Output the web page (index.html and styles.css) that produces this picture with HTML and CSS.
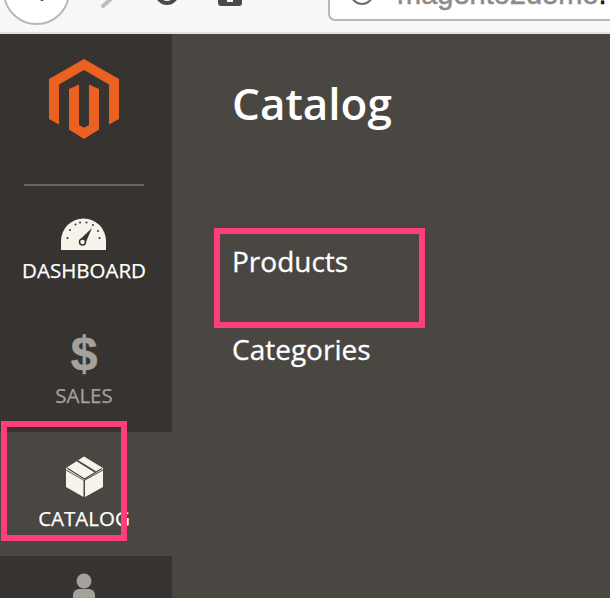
FILE: index.html
```html
<!DOCTYPE html>
<html lang="en">
<head>
<meta charset="utf-8">
<title>Catalog</title>
<link rel="stylesheet" href="styles.css">
</head>
<body>
<header class="browser">
  <div class="back"><svg class="back-icon" width="20" height="14" viewBox="0 0 20 14"><path d="M6 0l10 8" fill="none" stroke="#4a4a4a" stroke-width="4" stroke-linecap="round"/></svg></div>
  <svg class="forward" width="14" height="10" viewBox="0 0 14 10"><path d="M2 7l9-8" fill="none" stroke="#bdbdbd" stroke-width="4" stroke-linecap="round"/></svg>
  <svg class="reload" width="24" height="8" viewBox="0 0 24 8"><path d="M2-6a10 10 0 0 0 20 0" transform="translate(0 2)" fill="none" stroke="#4a4a4a" stroke-width="4"/></svg>
  <svg class="home" width="24" height="8" viewBox="0 0 24 8"><path d="M0 0h9v3h6V0h9v4a3 3 0 0 1-3 3H3a3 3 0 0 1-3-3z" fill="#4a4a4a"/></svg>
  <div class="address">
    <svg class="info" width="24" height="8" viewBox="0 0 24 8"><path d="M1-6a11 11 0 0 0 22 0" transform="translate(0 1)" fill="none" stroke="#6e6e6e" stroke-width="2"/></svg>
    <span class="url">magento2demo<span class="url-domain">.</span></span>
  </div>
</header>
<div class="admin">
  <nav class="sidebar">
    <div class="logo">
      <svg width="70" height="80" viewBox="49 59 70 80"><path fill="#eb6122" fill-rule="evenodd" d="M84 59l35 20v40l-10 5.600V84.600L84 70 59 84.600v40L49 119V79zM69 89l10-4.400V125l5 2.800 5-2.800V84.600L99 89v40.500L84 139l-15-9.500z"/></svg>
    </div>
    <a class="item item-first">
      <svg class="icon gauge" width="45" height="32" viewBox="0 0 45 32">
        <path d="M0 32V23a22.500 22.500 0 0 1 45 0v9z" fill="#f7f3eb"/>
        <g fill="#373330"><circle cx="6.500" cy="20" r="1.100"/><circle cx="9" cy="12" r="1"/><circle cx="14.500" cy="6.500" r="1"/><circle cx="19" cy="4.500" r="1"/><circle cx="25.500" cy="4.500" r="1"/><circle cx="32" cy="7" r="1"/><circle cx="37" cy="13" r="1"/><circle cx="38.500" cy="20" r="1.100"/></g>
        <path d="M31 10L24.500 25 19 21.500z" fill="#373330"/>
        <circle cx="21.500" cy="24" r="3" fill="#f7f3eb" stroke="#373330" stroke-width="1.500"/>
      </svg>
      <span class="label label-strong">DASHBOARD</span>
    </a>
    <a class="item">
      <span class="dollar">$</span>
      <span class="label">SALES</span>
    </a>
    <a class="item item-active">
      <svg class="icon box" width="37" height="41" viewBox="0 0 37 41">
        <path d="M18 .5L37 12v1.500L18 24 0 13.500V12z" fill="#f7f3eb"/>
        <path d="M0 14.500l17.500 10V41L0 31zM37 14.500l-18 10V41l18-10z" fill="#f7f3eb"/>
        <path d="M11 4.500l18.500 11.500" stroke="#4a4742" stroke-width="1.800" fill="none"/>
        <path d="M1 12l17.500 11L36 12.500" stroke="#4a4742" stroke-width="1.200" fill="none"/>
      </svg>
      <span class="label label-strong">CATALOG</span>
    </a>
    <a class="item item-user">
      <svg class="icon person" width="22" height="34" viewBox="0 0 22 34"><circle cx="11" cy="8" r="7.500" fill="#a5a29c"/><path d="M0 34v-12a6 6 0 0 1 6-6h10a6 6 0 0 1 6 6v12z" fill="#a5a29c"/></svg>
    </a>
  </nav>
  <main class="content">
    <h1 class="title">Catalog</h1>
    <ul class="links">
      <li class="link">Products</li>
      <li class="link">Categories</li>
    </ul>
  </main>
</div>
<div class="mark mark-products"></div>
<div class="mark mark-catalog"></div>
</body>
</html>
```
FILE: styles.css
```css
* { box-sizing: border-box; }
html, body { margin: 0; padding: 0; }
body {
  position: relative;
  width: 610px;
  height: 598px;
  overflow: hidden;
  background: #4a4742;
  font-family: "Open Sans", sans-serif;
}
.browser {
  display: flex;
  align-items: flex-end;
  height: 34px;
  background: #f8f8f8;
  border-bottom: 2px solid #e2e2e2;
  overflow: hidden;
}
.back {
  flex: none;
  width: 67px;
  height: 67px;
  margin: 0 0 7px 3px;
  border: 2px solid #b8b8b8;
  border-radius: 50%;
  background: #fff;
  display: flex;
  align-items: flex-end;
  justify-content: center;
}
.back-icon { margin-bottom: 18px; margin-right: 2px; }
.forward { flex: none; margin: 0 0 23px 31px; }
.reload { flex: none; margin: 0 0 27px 40px; }
.home { flex: none; margin: 0 0 25px 39px; }
.address {
  flex: none;
  display: flex;
  align-items: flex-end;
  width: 300px;
  height: 40px;
  margin: 0 -18px 11px 86px;
  padding-left: 20px;
  background: #fff;
  border: 2px solid #b8b8b8;
  border-right: 0;
  border-radius: 0 0 0 7px;
  overflow: hidden;
}
.info { flex: none; margin-bottom: 13px; }
.url {
  flex: none;
  margin: 0 0 12px 23px;
  font: 400 29px/26px "Liberation Sans", sans-serif;
  color: #8c8c8c;
  -webkit-text-stroke: 0.5px #8c8c8c;
  white-space: nowrap;
}
.url-domain { color: #111; -webkit-text-stroke: 0.5px #111; }
.admin { display: flex; height: 564px; }
.sidebar {
  flex: none;
  width: 172px;
  background: #373330;
  overflow: hidden;
}
.logo {
  height: 150px;
  padding: 25px 4px 0 0;
  display: flex;
  justify-content: center;
  align-items: flex-start;
}
.item {
  display: flex;
  flex-direction: column;
  align-items: center;
  height: 124px;
  padding: 34px 4px 0 0;
}
.item-first { position: relative; }
.item-first::before {
  content: "";
  position: absolute;
  top: 0;
  left: 24px;
  width: 120px;
  height: 2px;
  background: #6b6560;
}
.item-active { background: #4a4742; padding-top: 24px; }
.item-user { padding-top: 17px; }
.icon { display: block; flex: none; }
.gauge { margin: 0 1px -1px 0; }
.dollar {
  height: 45px;
  margin-top: -13px;
  font: 700 48px/50px "Liberation Sans", sans-serif;
  color: #a5a29c;
  -webkit-text-stroke: 0.6px #a5a29c;
}
.label {
  margin-top: 9px;
  font-size: 20.500px;
  line-height: 24px;
  color: #a5a29c;
  -webkit-text-stroke: 0.25px currentColor;
}
.label-strong { color: #fff; }
.content { flex: 1; padding: 39px 0 0 60px; }
.title {
  margin: 0;
  font-size: 44px;
  line-height: 60px;
  font-weight: 600;
  color: #fff;
}
.links { list-style: none; margin: 110px 0 0; padding: 0; }
.link {
  height: 88px;
  font-size: 28px;
  line-height: 36px;
  color: #fff;
  -webkit-text-stroke: 0.3px #fff;
}
.mark {
  position: absolute;
  border: 6px solid #fe3e7d;
}
.mark-products { left: 214px; top: 228px; width: 211px; height: 100px; }
.mark-catalog { left: 1px; top: 421px; width: 126px; height: 120px; }
```
